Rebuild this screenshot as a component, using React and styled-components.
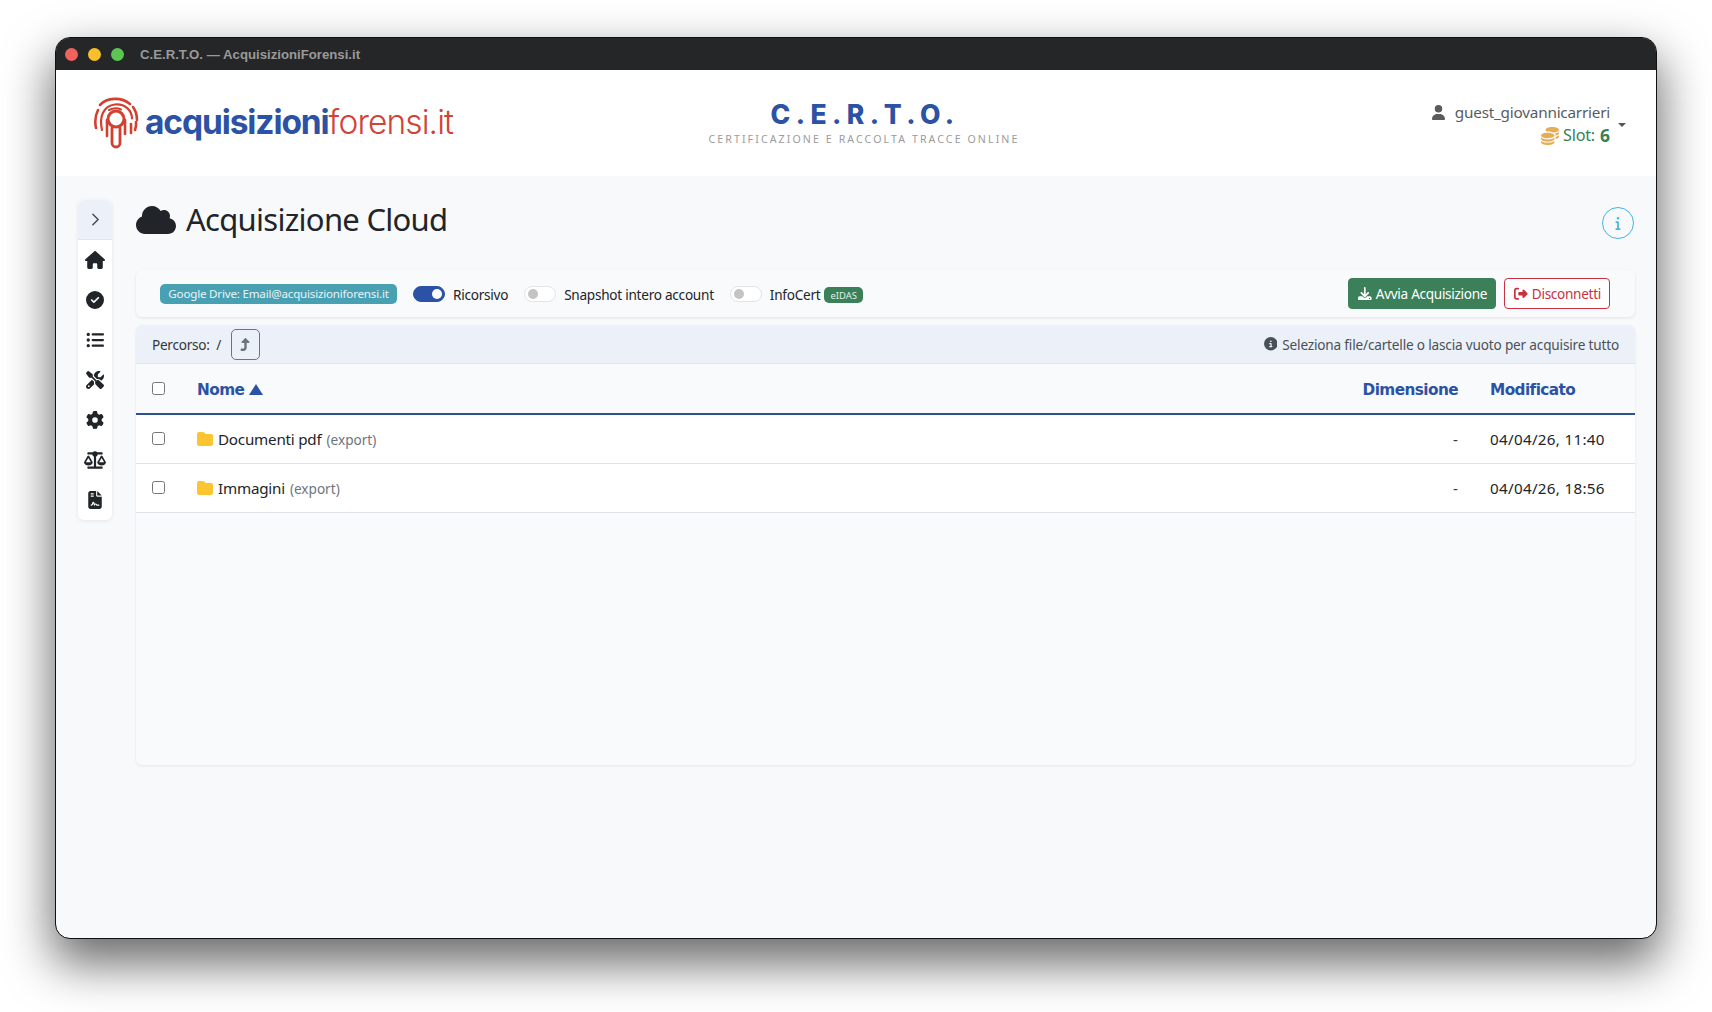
import React from 'react';
import styled, { createGlobalStyle } from 'styled-components';
import { ChevronRight } from 'lucide-react';
import {
  FaHouse, FaCircleCheck, FaListUl, FaScrewdriverWrench, FaGear, FaScaleBalanced,
  FaFileContract, FaCloud, FaFolder, FaTurnUp, FaDownload, FaCoins, FaUser, FaCircleInfo, FaInfo,
  FaRightFromBracket,
} from 'react-icons/fa6';

const Global = createGlobalStyle`
  html, body { margin: 0; padding: 0; background: #fff; }
  #root { width: 1712px; height: 1012px; overflow: hidden; }
  * { box-sizing: border-box; }
`;

const Page = styled.div`
  width: 1712px; height: 1012px; padding: 38px 56px 74px 56px; background: #fff;
  font-family: "Noto Sans", "Liberation Sans", sans-serif; color: #212529;
`;
const Win = styled.div`
  height: 900px; border-radius: 14px; overflow: hidden; background: #f8f9fb;
  display: flex; flex-direction: column; outline: 1px solid #111;
`;
const Shadow = styled.div`
  border-radius: 14px; box-shadow: 0 22px 48px 4px rgba(0,0,0,.58);
`;
const TitleBar = styled.div`
  height: 32px; background: #252627; display: flex; align-items: center; padding-left: 9px;
  flex: none;
`;
const Dot = styled.span`
  width: 13px; height: 13px; border-radius: 50%; background: ${p => p.$c}; margin-right: 10px;
`;
const WinTitle = styled.span`
  margin-left: 6px; font: 700 13.2px "Liberation Sans", sans-serif; color: #9a9a9a;
`;
const Header = styled.header`
  height: 106px; flex: none; background: #fff; display: grid; grid-template-columns: 1fr auto 1fr;
  align-items: center; padding: 0 30px 0 37px;
`;
const Logo = styled.div`display: flex; align-items: center; gap: 6px;`;
const LogoWord = styled.div`
  font: 700 33.5px Inter, sans-serif; letter-spacing: -1.1px; color: #2b52a4; line-height: 1;
  span { font-weight: 300; color: #cf4436; letter-spacing: -.9px; }
`;
const Center = styled.div`text-align: center; margin: -1px 0 0 5px;`;
const Brand = styled.div`
  font: 800 26.5px/29px Inter, sans-serif; color: #2b52a4; letter-spacing: 5.45px; margin-right: -6px;
`;
const Sub = styled.div`
  font: 400 10.6px/13px "Noto Sans", sans-serif; color: #9b9b9b; letter-spacing: 2.1px; margin: 4px -2px 0 2px;
`;
const User = styled.div`
  justify-self: end; display: flex; align-items: center; gap: 8px; color: #595c5f; font-size: 15.3px;
  letter-spacing: -.22px;
`;
const UserCol = styled.div`text-align: right; line-height: 23px;`;
const UserLine = styled.div`display: flex; justify-content: flex-end; align-items: center; gap: 9px; margin-top: 2px;`;
const SlotLine = styled.div`
  display: flex; justify-content: flex-end; align-items: center; gap: 4px; color: #3b8058; font-size: 16.2px;
  b { font-weight: 700; font-size: 17.5px; margin-left: 1px; letter-spacing: 0; }
`;
const Caret = styled.span`
  width: 0; height: 0; border: 4px solid transparent; border-top-color: #555; border-bottom: 0; margin-top: 4px;
`;
const Body = styled.div`flex: 1; display: flex; padding: 24px 21px 0 22px; gap: 24px; min-height: 0;`;
const Side = styled.nav`
  width: 34px; height: 320px; background: #fff; border-radius: 6px; flex: none;
  box-shadow: 0 1px 4px rgba(0,0,0,.08); display: flex; flex-direction: column; align-items: center;
  overflow: hidden;
`;
const SideToggle = styled.div`
  width: 100%; height: 40px; flex: none; background: #ecf1f9; display: flex; align-items: center;
  justify-content: center; color: #444; border-bottom: 1px solid #dfe6f2;
`;
const SideItem = styled.div`
  height: 40px; width: 100%; flex: none; display: flex; align-items: center; justify-content: center; color: #212529;
  font-size: ${p => p.$s}px;
`;
const Main = styled.main`flex: 1; min-width: 0; display: flex; flex-direction: column;`;
const TitleRow = styled.div`
  display: flex; align-items: flex-start; justify-content: space-between; height: 70px;
`;
const H1 = styled.h1`
  margin: 0; font: 400 31px/35px "Noto Sans", sans-serif; letter-spacing: -.72px; color: #212529;
  display: flex; align-items: center; gap: 10px;
  span { position: relative; top: -1px; }
  svg { font-size: 40px; }
`;
const InfoBtn = styled.div`
  width: 32px; height: 32px; border-radius: 50%; border: 1px solid #45b5e2; color: #45b5e2;
  display: flex; align-items: center; justify-content: center; font-size: 14px; margin: 7px 1px 0 0;
`;
const Toolbar = styled.div`
  height: 47px; background: #f9fafc; border-radius: 6px; box-shadow: 0 1px 3px rgba(0,0,0,.09);
  display: flex; align-items: center; padding: 0 25px 0 24px; font-size: 13.6px; letter-spacing: -.26px;
`;
const Badge = styled.span`
  background: #48a0b3; color: #e8f5f8; border-radius: 5px; height: 20px; width: 237px; display: flex; align-items: center;
  justify-content: center; font-size: 11.6px; letter-spacing: -.2px; white-space: nowrap;
`;
const Toggle = styled.span`
  width: 32px; height: 16px; border-radius: 8px; flex: none; position: relative;
  background: ${p => p.$on ? '#2b52a4' : '#fff'}; border: 1px solid ${p => p.$on ? '#2b52a4' : '#e2e4e7'};
  &::after {
    content: ''; position: absolute; top: 2px; width: 10px; height: 10px; border-radius: 50%;
    left: ${p => p.$on ? '18px' : '3px'}; background: ${p => p.$on ? '#fff' : '#c4c4c4'};
  }
`;
const Opt = styled.label`
  display: flex; align-items: center; gap: 8px; margin-left: ${p => p.$ml}px; white-space: nowrap;
  span.t { position: relative; top: 1px; }
`;
const Eidas = styled.span`
  background: #3b8058; color: #dff0e6; font-size: 9.5px; letter-spacing: 0; border-radius: 5px; padding: 0 6px; height: 16px;
  display: inline-flex; align-items: center; margin-left: -4px; margin-top: 3px;
`;
const Spacer = styled.div`flex: 1;`;
const Btn = styled.button`
  height: 31px; border-radius: 4px; font: 400 13.6px "Noto Sans", sans-serif; letter-spacing: -.3px; display: flex; align-items: center; gap: 4px;
  padding: 0 8px 0 9px; cursor: pointer;
  background: ${p => p.$danger ? '#fff' : '#3b8058'}; color: ${p => p.$danger ? '#c9313f' : '#fff'};
  border: 1px solid ${p => p.$danger ? '#c9313f' : '#3b8058'}; margin-left: ${p => p.$ml || 0}px;
`;
const Card = styled.div`
  margin-top: 8px; height: 440px; background: #f9fafc; border-radius: 6px; box-shadow: 0 1px 3px rgba(0,0,0,.08); overflow: hidden;
`;
const PathBar = styled.div`
  height: 39px; background: #ecf1f9; display: flex; align-items: center; padding: 0 16px; font-size: 13.6px; letter-spacing: -.26px;
  border-bottom: 1px solid #dfe6f2; color: #33373a;
`;
const UpBtn = styled.button`
  width: 29px; height: 31px; background: transparent; border: 1px solid #6c757d; border-radius: 5px; color: #6c757d;
  margin-left: 10px; display: flex; align-items: center; justify-content: center; font-size: 13px; padding: 0;
`;
const Hint = styled.span`
  margin-left: auto; display: flex; align-items: center; gap: 5px; color: #495057; letter-spacing: -.18px;
`;
const Row = styled.div`
  display: grid; grid-template-columns: 61px 1fr 140px 177px; align-items: center; background: ${p => p.$head ? '#f9fafc' : '#fff'};
  height: ${p => p.$head ? 51 : 49}px;
  border-bottom: ${p => p.$head ? '2px solid #2c5191' : '1px solid #dee2e6'};
  font-size: 15.2px;
`;
const Check = styled.input.attrs({ type: 'checkbox' })`
  width: 13px; height: 13px; margin: 0 0 ${p => p.$head ? 0 : 2}px 16px; appearance: none; background: #fff; border: 1px solid #767676; border-radius: 2.5px;
`;
const Th = styled.div`
  font: 700 15.3px "DejaVu Sans", sans-serif; color: #2b52a4; letter-spacing: -.58px; display: flex; align-items: center; gap: 5px;
  justify-content: ${p => p.$right ? 'flex-end' : 'flex-start'}; position: relative; top: 1px;
`;
const SortTri = styled.svg`width: 14px; height: 11px; fill: #2b52a4; margin-top: -1px;`;
const NameCell = styled.div`
  display: flex; align-items: center; gap: 5px; letter-spacing: -.22px; svg { color: #fbc531; font-size: 16px; }
  small { color: #6c757d; font-size: 13.6px; letter-spacing: 0; margin-left: 0; }
`;
const SizeCell = styled.div`text-align: right; color: #33373a;`;
const DateCell = styled.div`padding-left: 32px; color: #212529; white-space: nowrap; letter-spacing: .3px;`;

const Fingerprint = () => (
  <svg width="46" height="52" viewBox="0 0 46 52" fill="none" stroke="#d2402f" strokeWidth="2.6" strokeLinecap="round">
    <path d="M3 31C1.5 24 2.5 18 5 13" />
    <path d="M7 8C14 .5 28-.5 37 7" />
    <path d="M40 10c3 4 4 8 4 13" />
    <path d="M9 33C6 20 10 9 22 7.5c10-1 17 6 17 14" strokeWidth="2.2"/>
    <path d="M16 13c4-2 9-2 12-.5" strokeWidth="2"/>
    <path d="M43 25c.5 3 0 5-1 8" />
    <circle cx="23" cy="22" r="8" strokeWidth="3" />
    <path d="M14 23v16M32 23v14" />
    <path d="M19 31v15a4 4 0 0 0 8 0V31" strokeWidth="2.8"/>
    <path d="M38 27v9" />
  </svg>
);

const nav = [
  [FaHouse, 20], [FaCircleCheck, 18], [FaListUl, 18], [FaScrewdriverWrench, 18],
  [FaGear, 18], [FaScaleBalanced, 22], [FaFileContract, 18],
];
const rows = [
  { name: 'Documenti pdf', date: '04/04/26, 11:40' },
  { name: 'Immagini', date: '04/04/26, 18:56' },
];

export default function App() {
  return (
    <Page>
      <Global />
      <Shadow>
        <Win>
          <TitleBar>
            <Dot $c="#f0625c" /><Dot $c="#f7c02c" /><Dot $c="#5cc653" />
            <WinTitle>C.E.R.T.O. — AcquisizioniForensi.it</WinTitle>
          </TitleBar>
          <Header>
            <Logo>
              <Fingerprint />
              <LogoWord>acquisizioni<span>forensi.it</span></LogoWord>
            </Logo>
            <Center>
              <Brand>C.E.R.T.O.</Brand>
              <Sub>CERTIFICAZIONE E RACCOLTA TRACCE ONLINE</Sub>
            </Center>
            <User>
              <UserCol>
                <UserLine><FaUser size={15} />guest_giovannicarrieri</UserLine>
                <SlotLine><FaCoins size={18} color="#e5ad54" />Slot:<b>6</b></SlotLine>
              </UserCol>
              <Caret />
            </User>
          </Header>
          <Body>
            <Side>
              <SideToggle><ChevronRight size={21} strokeWidth={1.6} /></SideToggle>
              {nav.map(([I, s], i) => <SideItem key={i} $s={s}><I /></SideItem>)}
            </Side>
            <Main>
              <TitleRow>
                <H1><FaCloud /><span>Acquisizione Cloud</span></H1>
                <InfoBtn><FaInfo /></InfoBtn>
              </TitleRow>
              <Toolbar>
                <Badge>Google Drive: Email@acquisizioniforensi.it</Badge>
                <Opt $ml={16}><Toggle $on /><span className="t">Ricorsivo</span></Opt>
                <Opt $ml={16}><Toggle /><span className="t">Snapshot intero account</span></Opt>
                <Opt $ml={16}><Toggle /><span className="t">InfoCert</span> <Eidas>eIDAS</Eidas></Opt>
                <Spacer />
                <Btn><FaDownload />Avvia Acquisizione</Btn>
                <Btn $danger $ml={8}><FaRightFromBracket />Disconnetti</Btn>
              </Toolbar>
              <Card>
                <PathBar>
                  Percorso:&nbsp;&nbsp;/
                  <UpBtn><FaTurnUp /></UpBtn>
                  <Hint><FaCircleInfo />Seleziona file/cartelle o lascia vuoto per acquisire tutto</Hint>
                </PathBar>
                <Row $head>
                  <Check $head />
                  <Th>Nome <SortTri viewBox="0 0 14 11"><polygon points="7,0 14,11 0,11" /></SortTri></Th>
                  <Th $right>Dimensione</Th>
                  <DateCell><Th>Modificato</Th></DateCell>
                </Row>
                {rows.map(r => (
                  <Row key={r.name}>
                    <Check />
                    <NameCell><FaFolder />{r.name} <small>(export)</small></NameCell>
                    <SizeCell>-</SizeCell>
                    <DateCell>{r.date}</DateCell>
                  </Row>
                ))}
              </Card>
            </Main>
          </Body>
        </Win>
      </Shadow>
    </Page>
  );
}
